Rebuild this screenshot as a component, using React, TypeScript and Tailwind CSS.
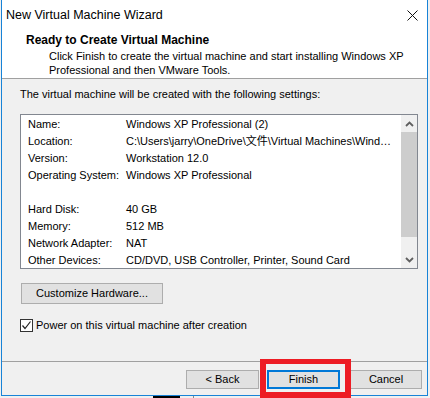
import React from 'react';

const font = { fontFamily: '"Liberation Sans", "Noto Sans CJK TC", sans-serif' };

const rows: [string, string][] = [
  ['Name:', 'Windows XP Professional (2)'],
  ['Location:', 'C:\\Users\\jarry\\OneDrive\\文件\\Virtual Machines\\Wind…'],
  ['Version:', 'Workstation 12.0'],
  ['Operating System:', 'Windows XP Professional'],
  ['', ''],
  ['Hard Disk:', '40 GB'],
  ['Memory:', '512 MB'],
  ['Network Adapter:', 'NAT'],
  ['Other Devices:', 'CD/DVD, USB Controller, Printer, Sound Card'],
];

function Chevron({ up }: { up?: boolean }) {
  return (
    <svg width="9" height="6" viewBox="0 0 9 6">
      <polyline
        points={up ? '1,5 4.5,1.5 8,5' : '1,1 4.5,4.5 8,1'}
        fill="none"
        stroke="#606060"
        strokeWidth="1.8"
      />
    </svg>
  );
}

function Button({ label, w, primary }: { label: string; w: string; primary?: boolean }) {
  return (
    <div
      className={`${w} h-[19px] flex items-center justify-center bg-[#e1e1e1] text-[11px] leading-none text-black ${
        primary ? 'border-2 border-[#0078d7]' : 'border border-[#adadad]'
      }`}
    >
      {label}
    </div>
  );
}

export default function App() {
  return (
    <div className="relative w-[430px] h-[398px] bg-[#f0f0f0] overflow-hidden" style={font}>
      <div className="ml-[1px] w-[427px] h-[396px] flex flex-col border-x border-b border-[#1883d7] bg-[#f0f0f0]">
        {/* Title bar */}
        <div className="h-[30px] bg-white flex items-center justify-between pl-[4px] pr-[9px]">
          <span className="text-[12.5px] text-black leading-none">New Virtual Machine Wizard</span>
          <svg width="11" height="11" viewBox="0 0 11 11">
            <path d="M0.5 0.5 L10.5 10.5 M10.5 0.5 L0.5 10.5" stroke="#111" strokeWidth="1" />
          </svg>
        </div>

        {/* Header */}
        <div className="h-[49px] bg-white border-b border-[#a0a0a0] pl-[24px] pt-[3px] whitespace-nowrap">
          <div className="text-[12px] font-bold leading-[14px] text-black">Ready to Create Virtual Machine</div>
          <div className="pl-[23px] pt-[2px] text-[11px] leading-[14px] text-black">
            Click Finish to create the virtual machine and start installing Windows XP
            <br />
            Professional and then VMware Tools.
          </div>
        </div>

        {/* Body */}
        <div className="flex flex-col pl-[18px] pr-[9px]">
          <div className="pt-[8px] text-[11px] leading-[15px] text-black whitespace-nowrap">
            The virtual machine will be created with the following settings:
          </div>

          <div className="mt-[12px] h-[155px] border border-[#828790] bg-white flex">
            <div className="flex-1 pl-[7px] pt-[1px]">
              {rows.map(([k, v], i) => (
                <div key={i} className="h-[17px] flex items-center text-[11px] text-black whitespace-nowrap">
                  <span className="w-[98px]">{k}</span>
                  <span>{v}</span>
                </div>
              ))}
            </div>
            <div className="w-[16px] flex flex-col bg-[#f0f0f0]">
              <div className="h-[17px] flex items-center justify-center">
                <Chevron up />
              </div>
              <div className="h-[105px] bg-[#cdcdcd]" />
              <div className="flex-1" />
              <div className="h-[17px] flex items-center justify-center">
                <Chevron />
              </div>
            </div>
          </div>

          <div className="mt-[14px] ml-[1px] w-[142px] h-[21px] flex items-center justify-center bg-[#e1e1e1] border border-[#adadad] text-[11px] text-black">
            Customize Hardware...
          </div>

          <div className="mt-[14px] flex items-center gap-[3px]">
            <div className="w-[13px] h-[13px] border border-[#333333] bg-white flex items-center justify-center">
              <svg width="11" height="11" viewBox="0 0 11 11">
                <polyline points="1.5,5.5 4,8.5 9.5,1.5" fill="none" stroke="#222" strokeWidth="1.2" />
              </svg>
            </div>
            <span className="text-[11px] leading-[15px] text-black">Power on this virtual machine after creation</span>
          </div>
        </div>

        {/* Footer */}
        <div className="mt-auto h-[34px] border-t border-[#a0a0a0] flex items-start justify-end pt-[8px] pr-[5px]">
          <Button label="< Back" w="w-[73px]" />
          <div className="ml-[8px]">
            <Button label="Finish" w="w-[73px]" primary />
          </div>
          <div className="ml-[10px]">
            <Button label="Cancel" w="w-[72px]" />
          </div>
        </div>
      </div>

      <div className="flex h-[2px]">
        <div className="ml-[153px] w-[27px] bg-black" />
        <div className="ml-[13px] w-[1px] bg-[#888888]" />
      </div>

      {/* annotation */}
      <div className="absolute left-[260px] top-[359px] w-[91px] h-[39px] border-[6px] border-t-[5px] border-[#ed1c24]" />
    </div>
  );
}
